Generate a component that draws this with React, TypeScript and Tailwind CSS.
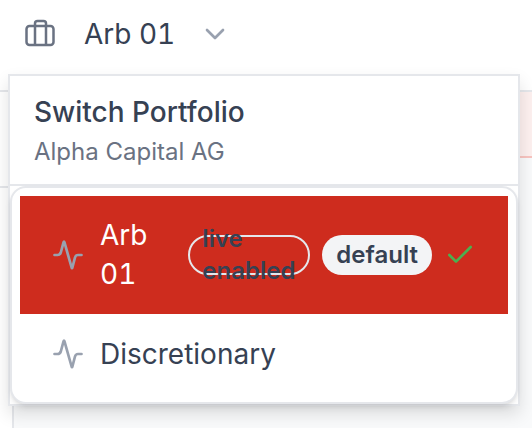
import { Check, ChevronDown } from "lucide-react";
import type { ReactNode } from "react";

type Portfolio = {
  id: string;
  name: string;
  selected?: boolean;
};

const portfolios: Portfolio[] = [
  { id: "arb-01", name: "Arb 01", selected: true },
  { id: "discretionary", name: "Discretionary" },
];

function LuggageIcon() {
  return (
    <svg
      viewBox="0 0 32 32"
      className="size-8 shrink-0 text-gray-500"
      fill="none"
      stroke="currentColor"
      strokeWidth="2.5"
      strokeLinejoin="round"
      aria-hidden="true"
    >
      <rect x="2.5" y="8" width="27" height="19" rx="3" />
      <path d="M11 27V5.500a2.500 2.500 0 0 1 2.500-2.500h6a2.500 2.500 0 0 1 2.500 2.500v21.500" />
    </svg>
  );
}

function PulseIcon() {
  return (
    <svg
      viewBox="0 0 32 32"
      className="mr-4 size-8 shrink-0 text-gray-400"
      fill="none"
      stroke="currentColor"
      strokeWidth="2.7"
      strokeLinecap="round"
      strokeLinejoin="round"
      aria-hidden="true"
    >
      <path d="M2.500 16H5.500Q8 16 8.800 13.500L11.600 3.200Q12 2 12.400 3.200L19.600 28.500Q20 29.700 20.400 28.500L23 18.500Q23.700 16 26 16H29.500" />
    </svg>
  );
}

function Badge({ outline, children }: { outline?: boolean; children: ReactNode }) {
  return (
    <span
      className={
        outline
          ? "flex h-10 w-[122px] shrink-0 items-center rounded-full border-2 border-gray-200 px-3 text-2xl/8 font-semibold text-gray-700"
          : "flex h-10 shrink-0 items-center rounded-full bg-gray-100 px-3.5 text-2xl/8 font-semibold text-gray-700"
      }
    >
      {children}
    </span>
  );
}

function PortfolioOption({ portfolio }: { portfolio: Portfolio }) {
  return (
    <button
      type="button"
      role="menuitemradio"
      aria-checked={Boolean(portfolio.selected)}
      className={
        portfolio.selected
          ? "flex min-h-20 w-full items-center bg-[#ce2c1e] px-8 py-5 text-left text-white"
          : "flex min-h-20 w-full items-center px-8 py-5 text-left text-gray-700"
      }
    >
      <PulseIcon />
      <span className="mr-3 flex-1 text-[28px]/[39px] tabular-nums">{portfolio.name}</span>
      {portfolio.selected && (
        <span className="flex items-center gap-3">
          <Badge outline>live enabled</Badge>
          <Badge>default</Badge>
          <Check className="size-8 shrink-0 text-[#4caf50]" strokeWidth={2} />
        </span>
      )}
    </button>
  );
}

export default function App() {
  return (
    <div className="flex min-h-screen flex-col bg-white font-['Inter',sans-serif] text-gray-700">
      <header className="relative border-b-2 border-gray-200 px-6 pt-3.5 pb-9">
        <button type="button" aria-haspopup="menu" aria-expanded="true" className="flex items-center">
          <LuggageIcon />
          <span className="ml-7 text-[28px]/10 tabular-nums">Arb 01</span>
          <ChevronDown className="ml-6 size-8 text-gray-400" strokeWidth={2} />
        </button>

        <div
          role="menu"
          aria-label="Switch Portfolio"
          className="absolute inset-x-2 top-[74px] z-10 mr-1 border-2 border-gray-200 bg-white shadow-[0_8px_16px_rgba(0,0,0,0.12)]"
        >
          <div className="border-b-2 border-gray-200 px-6 py-4">
            <h2 className="text-[28px]/10 font-medium">Switch Portfolio</h2>
            <p className="pt-1 text-2xl/8 text-gray-500">Alpha Capital AG</p>
          </div>
          <div className="rounded-2xl border-2 border-gray-200 bg-white p-2 shadow-md">
            {portfolios.map((portfolio) => (
              <PortfolioOption key={portfolio.id} portfolio={portfolio} />
            ))}
          </div>
        </div>
      </header>

      <div className="flex flex-1">
        <aside className="w-3.5 shrink-0 border-r-2 border-gray-200">
          <div className="h-24 border-b-2 border-gray-200" />
        </aside>
        <main className="flex-1 bg-gray-50">
          <div className="h-[66px] border-b-2 border-[#f8c4c0] bg-[#fdf0ef]" />
        </main>
      </div>
    </div>
  );
}
